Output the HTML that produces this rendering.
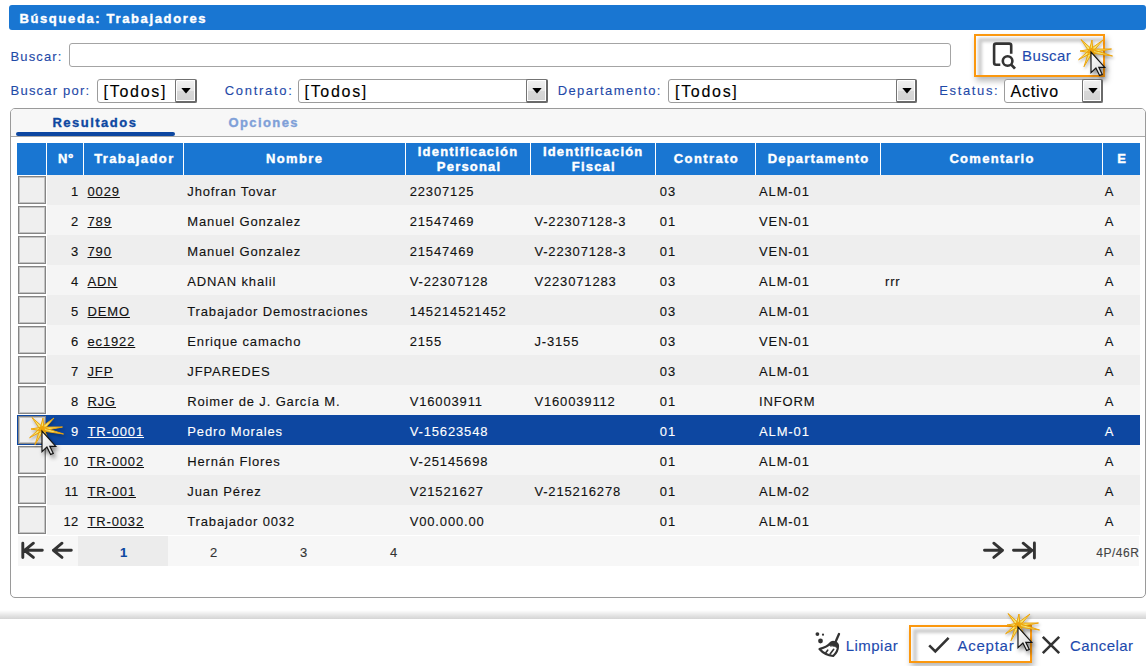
<!DOCTYPE html>
<html><head><meta charset="utf-8">
<style>
html,body{margin:0;padding:0;width:1146px;height:666px;overflow:hidden;background:#fff;}
body{position:relative;font-family:"Liberation Sans", sans-serif;}
.t{position:absolute;white-space:nowrap;line-height:1;-webkit-text-stroke:0.12px currentColor;}
.r{position:absolute;box-sizing:border-box;}
svg{position:absolute;overflow:visible;}
</style></head><body>
<div class="r" style="left:9px;top:5px;width:1137px;height:25px;background:#1976d2;border-radius:3px;"></div>
<div class="t" style="left:19.4px;top:12.00px;font-size:13px;font-weight:bold;color:#fff;letter-spacing:1.64px;-webkit-text-stroke:0.4px #fff;">Búsqueda: Trabajadores</div>
<div class="t" style="left:10.6px;top:50.00px;font-size:13px;font-weight:normal;color:#1f4aa8;letter-spacing:1.1px;">Buscar:</div>
<div class="r" style="left:69px;top:43px;width:882px;height:24px;border:1px solid #a4a4a4;border-radius:3px;background:#fff;"></div>
<div class="r" style="left:974px;top:34px;width:131px;height:43px;border:2px solid #fb980f;box-shadow:2px 4px 6px rgba(0,0,0,0.28);background:#fff;overflow:hidden;"></div>
<div class="r" style="left:976px;top:36px;width:127px;height:39px;overflow:hidden;"><div class="r" style="left:2px;top:2px;width:141px;height:53px;border-top:4px solid rgba(0,0,0,0.2);border-left:4px solid rgba(0,0,0,0.2);filter:blur(1.6px);"></div></div>
<div class="t" style="left:1022.0px;top:48.10px;font-size:15px;font-weight:normal;color:#1d4aae;letter-spacing:0.4px;">Buscar</div>
<div class="t" style="left:10.6px;top:83.50px;font-size:13px;font-weight:normal;color:#1f4aa8;letter-spacing:1.2px;">Buscar por:</div>
<div class="r" style="left:97px;top:79px;width:100px;height:24px;border:1px solid #9c9c9c;border-radius:3px;background:#fff;"></div>
<div class="r" style="left:175px;top:79px;width:22px;height:24px;border:1px solid #737373;border-right:2px solid #6a6a6a;border-bottom:2px solid #6a6a6a;border-radius:2px;background:linear-gradient(#f2f2f2 0%,#e6e6e6 50%,#d8d8d8 51%,#d2d2d2 100%);box-shadow:inset 0 0 0 1px #fff;"></div>
<svg style="left:181.0px;top:88px" width="10" height="6" viewBox="0 0 10 6"><path d="M0.3 0 H9.7 L5 5.6 Z" fill="#000"/></svg>
<div class="t" style="left:103.6px;top:83.66px;font-size:16px;font-weight:normal;color:#000;letter-spacing:1.7px;">[Todos]</div>
<div class="t" style="left:224.7px;top:83.50px;font-size:13px;font-weight:normal;color:#1f4aa8;letter-spacing:1.7px;">Contrato:</div>
<div class="r" style="left:298px;top:79px;width:250px;height:24px;border:1px solid #9c9c9c;border-radius:3px;background:#fff;"></div>
<div class="r" style="left:526px;top:79px;width:22px;height:24px;border:1px solid #737373;border-right:2px solid #6a6a6a;border-bottom:2px solid #6a6a6a;border-radius:2px;background:linear-gradient(#f2f2f2 0%,#e6e6e6 50%,#d8d8d8 51%,#d2d2d2 100%);box-shadow:inset 0 0 0 1px #fff;"></div>
<svg style="left:532.0px;top:88px" width="10" height="6" viewBox="0 0 10 6"><path d="M0.3 0 H9.7 L5 5.6 Z" fill="#000"/></svg>
<div class="t" style="left:304.5px;top:83.66px;font-size:16px;font-weight:normal;color:#000;letter-spacing:1.7px;">[Todos]</div>
<div class="t" style="left:557.7px;top:83.50px;font-size:13px;font-weight:normal;color:#1f4aa8;letter-spacing:1.4px;">Departamento:</div>
<div class="r" style="left:668px;top:79px;width:249px;height:24px;border:1px solid #9c9c9c;border-radius:3px;background:#fff;"></div>
<div class="r" style="left:896px;top:79px;width:21px;height:24px;border:1px solid #737373;border-right:2px solid #6a6a6a;border-bottom:2px solid #6a6a6a;border-radius:2px;background:linear-gradient(#f2f2f2 0%,#e6e6e6 50%,#d8d8d8 51%,#d2d2d2 100%);box-shadow:inset 0 0 0 1px #fff;"></div>
<svg style="left:901.5px;top:88px" width="10" height="6" viewBox="0 0 10 6"><path d="M0.3 0 H9.7 L5 5.6 Z" fill="#000"/></svg>
<div class="t" style="left:675.0px;top:83.66px;font-size:16px;font-weight:normal;color:#000;letter-spacing:1.7px;">[Todos]</div>
<div class="t" style="left:939.2px;top:83.50px;font-size:13px;font-weight:normal;color:#1f4aa8;letter-spacing:1.65px;">Estatus:</div>
<div class="r" style="left:1004px;top:79px;width:99px;height:24px;border:1px solid #9c9c9c;border-radius:3px;background:#fff;"></div>
<div class="r" style="left:1082px;top:79px;width:21px;height:24px;border:1px solid #737373;border-right:2px solid #6a6a6a;border-bottom:2px solid #6a6a6a;border-radius:2px;background:linear-gradient(#f2f2f2 0%,#e6e6e6 50%,#d8d8d8 51%,#d2d2d2 100%);box-shadow:inset 0 0 0 1px #fff;"></div>
<svg style="left:1087.5px;top:88px" width="10" height="6" viewBox="0 0 10 6"><path d="M0.3 0 H9.7 L5 5.6 Z" fill="#000"/></svg>
<div class="t" style="left:1010.5px;top:83.66px;font-size:16px;font-weight:normal;color:#000;letter-spacing:0.8px;">Activo</div>
<div class="r" style="left:10px;top:108px;width:1136px;height:490px;border:1px solid #9a9a9a;border-radius:5px;background:#fff;"></div>
<div class="r" style="left:11px;top:109px;width:1134px;height:28px;background:#f7f7f7;border-bottom:1px solid #a8a8a8;border-radius:4px 4px 0 0;"></div>
<div class="r" style="left:16px;top:132px;width:159px;height:4px;background:#0d47a1;border-radius:2px;"></div>
<div class="t" style="left:52.4px;top:116.00px;font-size:13px;font-weight:bold;color:#0d47a1;letter-spacing:1.5px;-webkit-text-stroke:0.35px #0d47a1;">Resultados</div>
<div class="t" style="left:228.5px;top:115.70px;font-size:13px;font-weight:bold;color:#7fa0d8;letter-spacing:1.4px;-webkit-text-stroke:0.35px #7fa0d8;">Opciones</div>
<div class="r" style="left:17px;top:143px;width:1123px;height:32px;background:#1976d2;"></div>
<div class="r" style="left:46px;top:143px;width:1px;height:32px;background:#fff;"></div>
<div class="r" style="left:83px;top:143px;width:1px;height:32px;background:#fff;"></div>
<div class="r" style="left:183px;top:143px;width:1px;height:32px;background:#fff;"></div>
<div class="r" style="left:405px;top:143px;width:1px;height:32px;background:#fff;"></div>
<div class="r" style="left:530px;top:143px;width:1px;height:32px;background:#fff;"></div>
<div class="r" style="left:655px;top:143px;width:1px;height:32px;background:#fff;"></div>
<div class="r" style="left:755px;top:143px;width:1px;height:32px;background:#fff;"></div>
<div class="r" style="left:880px;top:143px;width:1px;height:32px;background:#fff;"></div>
<div class="r" style="left:1102px;top:143px;width:1px;height:32px;background:#fff;"></div>
<div class="t" style="left:-134.5px;width:400px;text-align:center;top:151.60px;font-size:13px;font-weight:bold;color:#fff;letter-spacing:0.8px;text-indent:0.8px;-webkit-text-stroke:0.4px #fff;">Nº</div>
<div class="t" style="left:-66.3px;width:400px;text-align:center;top:151.60px;font-size:13px;font-weight:bold;color:#fff;letter-spacing:1.4px;text-indent:1.4px;-webkit-text-stroke:0.4px #fff;">Trabajador</div>
<div class="t" style="left:94.0px;width:400px;text-align:center;top:151.60px;font-size:13px;font-weight:bold;color:#fff;letter-spacing:1.4px;text-indent:1.4px;-webkit-text-stroke:0.4px #fff;">Nombre</div>
<div class="t" style="left:267.5px;width:400px;text-align:center;top:145.20px;font-size:13px;font-weight:bold;color:#fff;letter-spacing:1.2px;text-indent:1.2px;-webkit-text-stroke:0.4px #fff;">Identificación</div>
<div class="t" style="left:268.5px;width:400px;text-align:center;top:159.90px;font-size:13px;font-weight:bold;color:#fff;letter-spacing:1.2px;text-indent:1.2px;-webkit-text-stroke:0.4px #fff;">Personal</div>
<div class="t" style="left:392.6px;width:400px;text-align:center;top:145.20px;font-size:13px;font-weight:bold;color:#fff;letter-spacing:1.2px;text-indent:1.2px;-webkit-text-stroke:0.4px #fff;">Identificación</div>
<div class="t" style="left:393.2px;width:400px;text-align:center;top:159.90px;font-size:13px;font-weight:bold;color:#fff;letter-spacing:1.2px;text-indent:1.2px;-webkit-text-stroke:0.4px #fff;">Fiscal</div>
<div class="t" style="left:505.8px;width:400px;text-align:center;top:151.60px;font-size:13px;font-weight:bold;color:#fff;letter-spacing:1.4px;text-indent:1.4px;-webkit-text-stroke:0.4px #fff;">Contrato</div>
<div class="t" style="left:618.0px;width:400px;text-align:center;top:151.60px;font-size:13px;font-weight:bold;color:#fff;letter-spacing:1.2px;text-indent:1.2px;-webkit-text-stroke:0.4px #fff;">Departamento</div>
<div class="t" style="left:791.4px;width:400px;text-align:center;top:151.60px;font-size:13px;font-weight:bold;color:#fff;letter-spacing:1.3px;text-indent:1.3px;-webkit-text-stroke:0.4px #fff;">Comentario</div>
<div class="t" style="left:921.5px;width:400px;text-align:center;top:151.60px;font-size:13px;font-weight:bold;color:#fff;letter-spacing:0px;text-indent:0px;-webkit-text-stroke:0.4px #fff;">E</div>
<div class="r" style="left:47px;top:175px;width:1093px;height:30px;background:#eeeeee;"></div>
<div class="r" style="left:18px;top:176px;width:28px;height:28px;border:1px solid #858585;box-shadow:inset 0 0 0 1px rgba(140,140,140,0.45);background:#efefef;"></div>
<div class="t" style="left:-221.6px;width:300px;text-align:right;top:184.70px;font-size:13px;font-weight:normal;color:#111;letter-spacing:0.2px;margin-right:-0.2px;">1</div>
<div class="t" style="left:87.5px;top:184.70px;font-size:13px;font-weight:normal;color:#111;letter-spacing:0.85px;text-decoration:underline;">0029</div>
<div class="t" style="left:187.3px;top:184.70px;font-size:13px;font-weight:normal;color:#111;letter-spacing:0.85px;">Jhofran Tovar</div>
<div class="t" style="left:409.7px;top:184.70px;font-size:13px;font-weight:normal;color:#111;letter-spacing:0.85px;">22307125</div>
<div class="t" style="left:659.8px;top:184.70px;font-size:13px;font-weight:normal;color:#111;letter-spacing:0.85px;">03</div>
<div class="t" style="left:759.1px;top:184.70px;font-size:13px;font-weight:normal;color:#111;letter-spacing:0.85px;">ALM-01</div>
<div class="t" style="left:1104.8px;top:184.70px;font-size:13px;font-weight:normal;color:#111;letter-spacing:0.85px;">A</div>
<div class="r" style="left:47px;top:205px;width:1093px;height:30px;background:#f5f5f5;"></div>
<div class="r" style="left:18px;top:206px;width:28px;height:28px;border:1px solid #858585;box-shadow:inset 0 0 0 1px rgba(140,140,140,0.45);background:#efefef;"></div>
<div class="t" style="left:-221.6px;width:300px;text-align:right;top:214.70px;font-size:13px;font-weight:normal;color:#111;letter-spacing:0.2px;margin-right:-0.2px;">2</div>
<div class="t" style="left:87.5px;top:214.70px;font-size:13px;font-weight:normal;color:#111;letter-spacing:0.85px;text-decoration:underline;">789</div>
<div class="t" style="left:187.3px;top:214.70px;font-size:13px;font-weight:normal;color:#111;letter-spacing:0.85px;">Manuel Gonzalez</div>
<div class="t" style="left:409.7px;top:214.70px;font-size:13px;font-weight:normal;color:#111;letter-spacing:0.85px;">21547469</div>
<div class="t" style="left:534.4px;top:214.70px;font-size:13px;font-weight:normal;color:#111;letter-spacing:0.85px;">V-22307128-3</div>
<div class="t" style="left:659.8px;top:214.70px;font-size:13px;font-weight:normal;color:#111;letter-spacing:0.85px;">01</div>
<div class="t" style="left:759.1px;top:214.70px;font-size:13px;font-weight:normal;color:#111;letter-spacing:0.85px;">VEN-01</div>
<div class="t" style="left:1104.8px;top:214.70px;font-size:13px;font-weight:normal;color:#111;letter-spacing:0.85px;">A</div>
<div class="r" style="left:47px;top:235px;width:1093px;height:30px;background:#eeeeee;"></div>
<div class="r" style="left:18px;top:236px;width:28px;height:28px;border:1px solid #858585;box-shadow:inset 0 0 0 1px rgba(140,140,140,0.45);background:#efefef;"></div>
<div class="t" style="left:-221.6px;width:300px;text-align:right;top:244.70px;font-size:13px;font-weight:normal;color:#111;letter-spacing:0.2px;margin-right:-0.2px;">3</div>
<div class="t" style="left:87.5px;top:244.70px;font-size:13px;font-weight:normal;color:#111;letter-spacing:0.85px;text-decoration:underline;">790</div>
<div class="t" style="left:187.3px;top:244.70px;font-size:13px;font-weight:normal;color:#111;letter-spacing:0.85px;">Manuel Gonzalez</div>
<div class="t" style="left:409.7px;top:244.70px;font-size:13px;font-weight:normal;color:#111;letter-spacing:0.85px;">21547469</div>
<div class="t" style="left:534.4px;top:244.70px;font-size:13px;font-weight:normal;color:#111;letter-spacing:0.85px;">V-22307128-3</div>
<div class="t" style="left:659.8px;top:244.70px;font-size:13px;font-weight:normal;color:#111;letter-spacing:0.85px;">01</div>
<div class="t" style="left:759.1px;top:244.70px;font-size:13px;font-weight:normal;color:#111;letter-spacing:0.85px;">VEN-01</div>
<div class="t" style="left:1104.8px;top:244.70px;font-size:13px;font-weight:normal;color:#111;letter-spacing:0.85px;">A</div>
<div class="r" style="left:47px;top:265px;width:1093px;height:30px;background:#f5f5f5;"></div>
<div class="r" style="left:18px;top:266px;width:28px;height:28px;border:1px solid #858585;box-shadow:inset 0 0 0 1px rgba(140,140,140,0.45);background:#efefef;"></div>
<div class="t" style="left:-221.6px;width:300px;text-align:right;top:274.70px;font-size:13px;font-weight:normal;color:#111;letter-spacing:0.2px;margin-right:-0.2px;">4</div>
<div class="t" style="left:87.5px;top:274.70px;font-size:13px;font-weight:normal;color:#111;letter-spacing:0.85px;text-decoration:underline;">ADN</div>
<div class="t" style="left:187.3px;top:274.70px;font-size:13px;font-weight:normal;color:#111;letter-spacing:0.85px;">ADNAN khalil</div>
<div class="t" style="left:409.7px;top:274.70px;font-size:13px;font-weight:normal;color:#111;letter-spacing:0.85px;">V-22307128</div>
<div class="t" style="left:534.4px;top:274.70px;font-size:13px;font-weight:normal;color:#111;letter-spacing:0.85px;">V223071283</div>
<div class="t" style="left:659.8px;top:274.70px;font-size:13px;font-weight:normal;color:#111;letter-spacing:0.85px;">03</div>
<div class="t" style="left:759.1px;top:274.70px;font-size:13px;font-weight:normal;color:#111;letter-spacing:0.85px;">ALM-01</div>
<div class="t" style="left:885.0px;top:274.70px;font-size:13px;font-weight:normal;color:#111;letter-spacing:0.85px;">rrr</div>
<div class="t" style="left:1104.8px;top:274.70px;font-size:13px;font-weight:normal;color:#111;letter-spacing:0.85px;">A</div>
<div class="r" style="left:47px;top:295px;width:1093px;height:30px;background:#eeeeee;"></div>
<div class="r" style="left:18px;top:296px;width:28px;height:28px;border:1px solid #858585;box-shadow:inset 0 0 0 1px rgba(140,140,140,0.45);background:#efefef;"></div>
<div class="t" style="left:-221.6px;width:300px;text-align:right;top:304.70px;font-size:13px;font-weight:normal;color:#111;letter-spacing:0.2px;margin-right:-0.2px;">5</div>
<div class="t" style="left:87.5px;top:304.70px;font-size:13px;font-weight:normal;color:#111;letter-spacing:0.85px;text-decoration:underline;">DEMO</div>
<div class="t" style="left:187.3px;top:304.70px;font-size:13px;font-weight:normal;color:#111;letter-spacing:0.85px;">Trabajador Demostraciones</div>
<div class="t" style="left:409.7px;top:304.70px;font-size:13px;font-weight:normal;color:#111;letter-spacing:0.85px;">145214521452</div>
<div class="t" style="left:659.8px;top:304.70px;font-size:13px;font-weight:normal;color:#111;letter-spacing:0.85px;">03</div>
<div class="t" style="left:759.1px;top:304.70px;font-size:13px;font-weight:normal;color:#111;letter-spacing:0.85px;">ALM-01</div>
<div class="t" style="left:1104.8px;top:304.70px;font-size:13px;font-weight:normal;color:#111;letter-spacing:0.85px;">A</div>
<div class="r" style="left:47px;top:325px;width:1093px;height:30px;background:#f5f5f5;"></div>
<div class="r" style="left:18px;top:326px;width:28px;height:28px;border:1px solid #858585;box-shadow:inset 0 0 0 1px rgba(140,140,140,0.45);background:#efefef;"></div>
<div class="t" style="left:-221.6px;width:300px;text-align:right;top:334.70px;font-size:13px;font-weight:normal;color:#111;letter-spacing:0.2px;margin-right:-0.2px;">6</div>
<div class="t" style="left:87.5px;top:334.70px;font-size:13px;font-weight:normal;color:#111;letter-spacing:0.85px;text-decoration:underline;">ec1922</div>
<div class="t" style="left:187.3px;top:334.70px;font-size:13px;font-weight:normal;color:#111;letter-spacing:0.85px;">Enrique camacho</div>
<div class="t" style="left:409.7px;top:334.70px;font-size:13px;font-weight:normal;color:#111;letter-spacing:0.85px;">2155</div>
<div class="t" style="left:534.4px;top:334.70px;font-size:13px;font-weight:normal;color:#111;letter-spacing:0.85px;">J-3155</div>
<div class="t" style="left:659.8px;top:334.70px;font-size:13px;font-weight:normal;color:#111;letter-spacing:0.85px;">03</div>
<div class="t" style="left:759.1px;top:334.70px;font-size:13px;font-weight:normal;color:#111;letter-spacing:0.85px;">VEN-01</div>
<div class="t" style="left:1104.8px;top:334.70px;font-size:13px;font-weight:normal;color:#111;letter-spacing:0.85px;">A</div>
<div class="r" style="left:47px;top:355px;width:1093px;height:30px;background:#eeeeee;"></div>
<div class="r" style="left:18px;top:356px;width:28px;height:28px;border:1px solid #858585;box-shadow:inset 0 0 0 1px rgba(140,140,140,0.45);background:#efefef;"></div>
<div class="t" style="left:-221.6px;width:300px;text-align:right;top:364.70px;font-size:13px;font-weight:normal;color:#111;letter-spacing:0.2px;margin-right:-0.2px;">7</div>
<div class="t" style="left:87.5px;top:364.70px;font-size:13px;font-weight:normal;color:#111;letter-spacing:0.85px;text-decoration:underline;">JFP</div>
<div class="t" style="left:187.3px;top:364.70px;font-size:13px;font-weight:normal;color:#111;letter-spacing:0.85px;">JFPAREDES</div>
<div class="t" style="left:659.8px;top:364.70px;font-size:13px;font-weight:normal;color:#111;letter-spacing:0.85px;">03</div>
<div class="t" style="left:759.1px;top:364.70px;font-size:13px;font-weight:normal;color:#111;letter-spacing:0.85px;">ALM-01</div>
<div class="t" style="left:1104.8px;top:364.70px;font-size:13px;font-weight:normal;color:#111;letter-spacing:0.85px;">A</div>
<div class="r" style="left:47px;top:385px;width:1093px;height:30px;background:#f5f5f5;"></div>
<div class="r" style="left:18px;top:386px;width:28px;height:28px;border:1px solid #858585;box-shadow:inset 0 0 0 1px rgba(140,140,140,0.45);background:#efefef;"></div>
<div class="t" style="left:-221.6px;width:300px;text-align:right;top:394.70px;font-size:13px;font-weight:normal;color:#111;letter-spacing:0.2px;margin-right:-0.2px;">8</div>
<div class="t" style="left:87.5px;top:394.70px;font-size:13px;font-weight:normal;color:#111;letter-spacing:0.85px;text-decoration:underline;">RJG</div>
<div class="t" style="left:187.3px;top:394.70px;font-size:13px;font-weight:normal;color:#111;letter-spacing:0.85px;">Roimer de J. García M.</div>
<div class="t" style="left:409.7px;top:394.70px;font-size:13px;font-weight:normal;color:#111;letter-spacing:0.85px;">V16003911</div>
<div class="t" style="left:534.4px;top:394.70px;font-size:13px;font-weight:normal;color:#111;letter-spacing:0.85px;">V160039112</div>
<div class="t" style="left:659.8px;top:394.70px;font-size:13px;font-weight:normal;color:#111;letter-spacing:0.85px;">01</div>
<div class="t" style="left:759.1px;top:394.70px;font-size:13px;font-weight:normal;color:#111;letter-spacing:0.85px;">INFORM</div>
<div class="t" style="left:1104.8px;top:394.70px;font-size:13px;font-weight:normal;color:#111;letter-spacing:0.85px;">A</div>
<div class="r" style="left:17px;top:415px;width:1123px;height:30px;background:#0d47a1;"></div>
<div class="r" style="left:18px;top:416px;width:28px;height:28px;border:1px solid #858585;box-shadow:inset 0 0 0 1px rgba(140,140,140,0.45);background:#efefef;"></div>
<div class="t" style="left:-221.6px;width:300px;text-align:right;top:424.70px;font-size:13px;font-weight:normal;color:#fff;letter-spacing:0.2px;margin-right:-0.2px;">9</div>
<div class="t" style="left:87.5px;top:424.70px;font-size:13px;font-weight:normal;color:#fff;letter-spacing:0.85px;text-decoration:underline;">TR-0001</div>
<div class="t" style="left:187.3px;top:424.70px;font-size:13px;font-weight:normal;color:#fff;letter-spacing:0.85px;">Pedro Morales</div>
<div class="t" style="left:409.7px;top:424.70px;font-size:13px;font-weight:normal;color:#fff;letter-spacing:0.85px;">V-15623548</div>
<div class="t" style="left:659.8px;top:424.70px;font-size:13px;font-weight:normal;color:#fff;letter-spacing:0.85px;">01</div>
<div class="t" style="left:759.1px;top:424.70px;font-size:13px;font-weight:normal;color:#fff;letter-spacing:0.85px;">ALM-01</div>
<div class="t" style="left:1104.8px;top:424.70px;font-size:13px;font-weight:normal;color:#fff;letter-spacing:0.85px;">A</div>
<div class="r" style="left:47px;top:445px;width:1093px;height:30px;background:#f5f5f5;"></div>
<div class="r" style="left:18px;top:446px;width:28px;height:28px;border:1px solid #858585;box-shadow:inset 0 0 0 1px rgba(140,140,140,0.45);background:#efefef;"></div>
<div class="t" style="left:-221.6px;width:300px;text-align:right;top:454.70px;font-size:13px;font-weight:normal;color:#111;letter-spacing:0.2px;margin-right:-0.2px;">10</div>
<div class="t" style="left:87.5px;top:454.70px;font-size:13px;font-weight:normal;color:#111;letter-spacing:0.85px;text-decoration:underline;">TR-0002</div>
<div class="t" style="left:187.3px;top:454.70px;font-size:13px;font-weight:normal;color:#111;letter-spacing:0.85px;">Hernán Flores</div>
<div class="t" style="left:409.7px;top:454.70px;font-size:13px;font-weight:normal;color:#111;letter-spacing:0.85px;">V-25145698</div>
<div class="t" style="left:659.8px;top:454.70px;font-size:13px;font-weight:normal;color:#111;letter-spacing:0.85px;">01</div>
<div class="t" style="left:759.1px;top:454.70px;font-size:13px;font-weight:normal;color:#111;letter-spacing:0.85px;">ALM-01</div>
<div class="t" style="left:1104.8px;top:454.70px;font-size:13px;font-weight:normal;color:#111;letter-spacing:0.85px;">A</div>
<div class="r" style="left:47px;top:475px;width:1093px;height:30px;background:#eeeeee;"></div>
<div class="r" style="left:18px;top:476px;width:28px;height:28px;border:1px solid #858585;box-shadow:inset 0 0 0 1px rgba(140,140,140,0.45);background:#efefef;"></div>
<div class="t" style="left:-221.6px;width:300px;text-align:right;top:484.70px;font-size:13px;font-weight:normal;color:#111;letter-spacing:0.2px;margin-right:-0.2px;">11</div>
<div class="t" style="left:87.5px;top:484.70px;font-size:13px;font-weight:normal;color:#111;letter-spacing:0.85px;text-decoration:underline;">TR-001</div>
<div class="t" style="left:187.3px;top:484.70px;font-size:13px;font-weight:normal;color:#111;letter-spacing:0.85px;">Juan Pérez</div>
<div class="t" style="left:409.7px;top:484.70px;font-size:13px;font-weight:normal;color:#111;letter-spacing:0.85px;">V21521627</div>
<div class="t" style="left:534.4px;top:484.70px;font-size:13px;font-weight:normal;color:#111;letter-spacing:0.85px;">V-215216278</div>
<div class="t" style="left:659.8px;top:484.70px;font-size:13px;font-weight:normal;color:#111;letter-spacing:0.85px;">01</div>
<div class="t" style="left:759.1px;top:484.70px;font-size:13px;font-weight:normal;color:#111;letter-spacing:0.85px;">ALM-02</div>
<div class="t" style="left:1104.8px;top:484.70px;font-size:13px;font-weight:normal;color:#111;letter-spacing:0.85px;">A</div>
<div class="r" style="left:47px;top:505px;width:1093px;height:30px;background:#f5f5f5;"></div>
<div class="r" style="left:18px;top:506px;width:28px;height:28px;border:1px solid #858585;box-shadow:inset 0 0 0 1px rgba(140,140,140,0.45);background:#efefef;"></div>
<div class="t" style="left:-221.6px;width:300px;text-align:right;top:514.70px;font-size:13px;font-weight:normal;color:#111;letter-spacing:0.2px;margin-right:-0.2px;">12</div>
<div class="t" style="left:87.5px;top:514.70px;font-size:13px;font-weight:normal;color:#111;letter-spacing:0.85px;text-decoration:underline;">TR-0032</div>
<div class="t" style="left:187.3px;top:514.70px;font-size:13px;font-weight:normal;color:#111;letter-spacing:0.85px;">Trabajador 0032</div>
<div class="t" style="left:409.7px;top:514.70px;font-size:13px;font-weight:normal;color:#111;letter-spacing:0.85px;">V00.000.00</div>
<div class="t" style="left:659.8px;top:514.70px;font-size:13px;font-weight:normal;color:#111;letter-spacing:0.85px;">01</div>
<div class="t" style="left:759.1px;top:514.70px;font-size:13px;font-weight:normal;color:#111;letter-spacing:0.85px;">ALM-01</div>
<div class="t" style="left:1104.8px;top:514.70px;font-size:13px;font-weight:normal;color:#111;letter-spacing:0.85px;">A</div>
<div class="r" style="left:18px;top:536px;width:1121px;height:30px;background:#f7f7f7;"></div>
<div class="r" style="left:78px;top:536px;width:90px;height:30px;background:#ececec;"></div>
<div class="t" style="left:-76.5px;width:400px;text-align:center;top:545.60px;font-size:13px;font-weight:bold;color:#0d47a1;letter-spacing:0px;text-indent:0px;">1</div>
<div class="t" style="left:13.5px;width:400px;text-align:center;top:545.60px;font-size:13px;font-weight:normal;color:#333;letter-spacing:0px;text-indent:0px;">2</div>
<div class="t" style="left:103.5px;width:400px;text-align:center;top:545.60px;font-size:13px;font-weight:normal;color:#333;letter-spacing:0px;text-indent:0px;">3</div>
<div class="t" style="left:193.5px;width:400px;text-align:center;top:545.60px;font-size:13px;font-weight:normal;color:#333;letter-spacing:0px;text-indent:0px;">4</div>
<div class="t" style="left:839.5px;width:300px;text-align:right;top:546.64px;font-size:12px;font-weight:normal;color:#444;letter-spacing:0.55px;margin-right:-0.55px;">4P/46R</div>
<div class="r" style="left:0px;top:610px;width:1146px;height:9px;background:linear-gradient(rgba(0,0,0,0) 0%,rgba(0,0,0,0.05) 30%,rgba(0,0,0,0.12) 70%,rgba(0,0,0,0.17) 100%);"></div>
<div class="t" style="left:845.8px;top:638.00px;font-size:15px;font-weight:normal;color:#1d4aae;letter-spacing:0.45px;">Limpiar</div>
<div class="r" style="left:909px;top:625px;width:123px;height:38px;border:2px solid #fb980f;box-shadow:2px 4px 6px rgba(0,0,0,0.28);background:#fff;overflow:hidden;"></div>
<div class="r" style="left:911px;top:627px;width:119px;height:34px;overflow:hidden;"><div class="r" style="left:2px;top:2px;width:133px;height:48px;border-top:4px solid rgba(0,0,0,0.2);border-left:4px solid rgba(0,0,0,0.2);filter:blur(1.6px);"></div></div>
<div class="t" style="left:957.5px;top:637.80px;font-size:15px;font-weight:normal;color:#1d4aae;letter-spacing:0.75px;">Aceptar</div>
<div class="t" style="left:1070.0px;top:637.80px;font-size:15px;font-weight:normal;color:#1d4aae;letter-spacing:0.43px;">Cancelar</div>
<svg style="left:0;top:0" width="1146" height="666" viewBox="0 0 1146 666">
<g fill="none" stroke="#333" stroke-width="2.3" stroke-linecap="butt" stroke-linejoin="round">
<path stroke-width="2.6" d="M1000.3 64.8 H996.1 Q994.1 64.8 994.1 62.8 V45.6 Q994.1 43.6 996.1 43.6 H1009.2 Q1011.2 43.6 1011.2 45.6 V53.8"/>
<circle cx="1007.6" cy="61" r="4.8" stroke-width="2.6"/>
<path d="M1011.2 64.6 L1015 68.6" stroke-width="2.8"/>
</g>
<g fill="none" stroke="#333" stroke-width="2.9" stroke-linecap="round" stroke-linejoin="round">
<path d="M22.8 543.3 V557.5 M33.4 543.2 L24.5 550.3 L33.4 557.4 M24.5 550.3 H42.3"/>
<path d="M62 543.2 L53.4 550.3 L62 557.4 M53.4 550.3 H71.3"/>
<path d="M984.5 550.3 H1002.5 M993.8 543.2 L1002.5 550.3 L993.8 557.4"/>
<path d="M1013.5 550.3 H1032 M1023.2 543.2 L1032 550.3 L1023.2 557.4 M1034.4 543 V558"/>
</g>
<g fill="none" stroke="#333" stroke-width="2.6" stroke-linecap="butt" stroke-linejoin="miter">
<path d="M929.2 645.3 L935.3 651.4 L948.6 637.9"/>
<path d="M1042.8 636.8 L1059.2 653.2 M1059.2 636.8 L1042.8 653.2"/>
</g>
<g fill="#333">
<circle cx="817.4" cy="634.1" r="1.9"/><circle cx="823" cy="634.7" r="1.1"/><circle cx="820.5" cy="641" r="2.4"/>
</g>
<g fill="none" stroke="#333" stroke-linecap="round" stroke-linejoin="round">
<path d="M839 634 L835.5 642" stroke-width="2.3"/>
<path d="M819.5 649 C823 648 827 647 829.5 644 C831 642 832.5 641.6 834 642 C836 642.5 838 644 838 646 C838 649 836 653.5 833.2 656 C828 655.5 822.5 652.5 819.5 649 Z" stroke-width="2.2" fill="#fff"/>
<path d="M829.5 644 C831 642 832.5 641.6 834 642 C836 642.5 838 644 838 646 L837.5 648 C836 646.5 833 645.5 830.5 646 Z" fill="#333" stroke-width="1"/>
<path d="M833.7 649.3 L830.1 654.1 M827.7 650.2 L825.9 652.6" stroke-width="1.6"/>
</g>
</svg>
<svg style="left:1065.5px;top:25.5px" width="50" height="50" viewBox="-25 -25 50 50"><g style="filter:drop-shadow(1px 2px 1.5px rgba(0,0,0,0.3))"><path d="M-1.89 -0.17 L1.00 -11.00 L1.89 0.17 Z M-1.43 1.25 L-10.00 -11.50 L1.43 -1.25 Z M-1.28 -1.40 L12.00 -11.00 L1.28 1.40 Z M-0.00 1.90 L-11.00 0.00 L0.00 -1.90 Z M-0.18 -1.89 L20.50 -2.00 L0.18 1.89 Z M0.43 -1.85 L21.50 5.00 L-0.43 1.85 Z M1.09 1.56 L-12.40 8.70 L-1.09 -1.56 Z M1.74 0.77 L-7.00 15.70 L-1.74 -0.77 Z M1.63 -0.98 L6.00 10.00 L-1.63 0.98 Z" fill="#f4e470" stroke="#eda30a" stroke-width="1.0" stroke-linejoin="round"/></g></svg>
<svg style="left:1089px;top:49.5px" width="34" height="36" viewBox="-2 -2 34 36"><defs><linearGradient id="cg" x1="0" y1="0" x2="0.6" y2="1"><stop offset="0" stop-color="#fff"/><stop offset="1" stop-color="#dcdcdc"/></linearGradient></defs><path d="M0 0 L0 20.6 L4.9 16 L8.6 23.6 L11.3 22.4 L7.8 15.3 L13.8 15.3 Z" fill="url(#cg)" stroke="#111" stroke-width="1.15" stroke-linejoin="miter" style="filter:drop-shadow(2px 3px 2px rgba(0,0,0,0.45))"/></svg>
<svg style="left:16.5px;top:404px" width="50" height="50" viewBox="-25 -25 50 50"><g style="filter:drop-shadow(1px 2px 1.5px rgba(0,0,0,0.3))"><path d="M-1.89 -0.17 L1.00 -11.00 L1.89 0.17 Z M-1.43 1.25 L-10.00 -11.50 L1.43 -1.25 Z M-1.28 -1.40 L12.00 -11.00 L1.28 1.40 Z M-0.00 1.90 L-11.00 0.00 L0.00 -1.90 Z M-0.18 -1.89 L20.50 -2.00 L0.18 1.89 Z M0.43 -1.85 L21.50 5.00 L-0.43 1.85 Z M1.09 1.56 L-12.40 8.70 L-1.09 -1.56 Z M1.74 0.77 L-7.00 15.70 L-1.74 -0.77 Z M1.63 -0.98 L6.00 10.00 L-1.63 0.98 Z" fill="#f4e470" stroke="#eda30a" stroke-width="1.0" stroke-linejoin="round"/></g></svg>
<svg style="left:39.8px;top:428.5px" width="34" height="36" viewBox="-2 -2 34 36"><defs><linearGradient id="cg" x1="0" y1="0" x2="0.6" y2="1"><stop offset="0" stop-color="#fff"/><stop offset="1" stop-color="#dcdcdc"/></linearGradient></defs><path d="M0 0 L0 20.6 L4.9 16 L8.6 23.6 L11.3 22.4 L7.8 15.3 L13.8 15.3 Z" fill="url(#cg)" stroke="#111" stroke-width="1.15" stroke-linejoin="miter" style="filter:drop-shadow(2px 3px 2px rgba(0,0,0,0.45))"/></svg>
<svg style="left:992.6px;top:600.4px" width="50" height="50" viewBox="-25 -25 50 50"><g style="filter:drop-shadow(1px 2px 1.5px rgba(0,0,0,0.3))"><path d="M-1.89 -0.17 L1.00 -11.00 L1.89 0.17 Z M-1.43 1.25 L-10.00 -11.50 L1.43 -1.25 Z M-1.28 -1.40 L12.00 -11.00 L1.28 1.40 Z M-0.00 1.90 L-11.00 0.00 L0.00 -1.90 Z M-0.18 -1.89 L20.50 -2.00 L0.18 1.89 Z M0.43 -1.85 L21.50 5.00 L-0.43 1.85 Z M1.09 1.56 L-12.40 8.70 L-1.09 -1.56 Z M1.74 0.77 L-7.00 15.70 L-1.74 -0.77 Z M1.63 -0.98 L6.00 10.00 L-1.63 0.98 Z" fill="#f4e470" stroke="#eda30a" stroke-width="1.0" stroke-linejoin="round"/></g></svg>
<svg style="left:1016px;top:625px" width="34" height="36" viewBox="-2 -2 34 36"><defs><linearGradient id="cg" x1="0" y1="0" x2="0.6" y2="1"><stop offset="0" stop-color="#fff"/><stop offset="1" stop-color="#dcdcdc"/></linearGradient></defs><path d="M0 0 L0 20.6 L4.9 16 L8.6 23.6 L11.3 22.4 L7.8 15.3 L13.8 15.3 Z" fill="url(#cg)" stroke="#111" stroke-width="1.15" stroke-linejoin="miter" style="filter:drop-shadow(2px 3px 2px rgba(0,0,0,0.45))"/></svg>
</body></html>
